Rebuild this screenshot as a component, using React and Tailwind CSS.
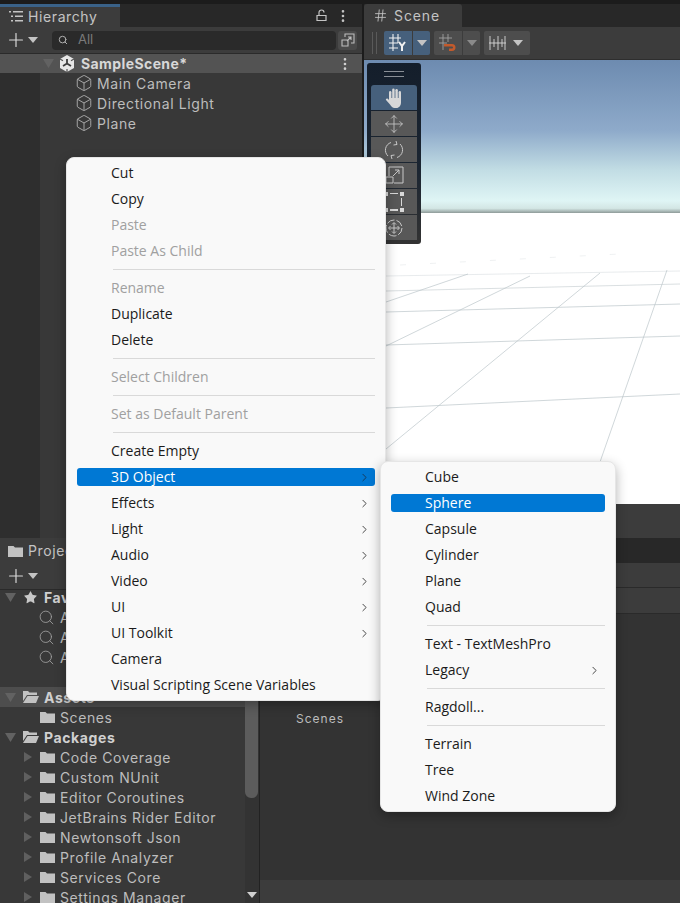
import { Box, ChevronRight, EllipsisVertical, Hash, Move, Plus, Search, Star } from "lucide-react";

const uiFont = "font-['Inter','Liberation_Sans',sans-serif]";

const mainMenu = [
  { label: "Cut" },
  { label: "Copy" },
  { label: "Paste", off: true },
  { label: "Paste As Child", off: true },
  { sep: true },
  { label: "Rename", off: true },
  { label: "Duplicate" },
  { label: "Delete" },
  { sep: true },
  { label: "Select Children", off: true },
  { sep: true },
  { label: "Set as Default Parent", off: true },
  { sep: true },
  { label: "Create Empty" },
  { label: "3D Object", arrow: true, active: true },
  { label: "Effects", arrow: true },
  { label: "Light", arrow: true },
  { label: "Audio", arrow: true },
  { label: "Video", arrow: true },
  { label: "UI", arrow: true },
  { label: "UI Toolkit", arrow: true },
  { label: "Camera" },
  { label: "Visual Scripting Scene Variables" },
];

const subMenu = [
  { label: "Cube" },
  { label: "Sphere", active: true },
  { label: "Capsule" },
  { label: "Cylinder" },
  { label: "Plane" },
  { label: "Quad" },
  { sep: true },
  { label: "Text - TextMeshPro" },
  { label: "Legacy", arrow: true },
  { sep: true },
  { label: "Ragdoll..." },
  { sep: true },
  { label: "Terrain" },
  { label: "Tree" },
  { label: "Wind Zone" },
];

const packages = [
  "Code Coverage",
  "Custom NUnit",
  "Editor Coroutines",
  "JetBrains Rider Editor",
  "Newtonsoft Json",
  "Profile Analyzer",
  "Services Core",
  "Settings Manager",
];

const Caret = ({ className = "", color = "#c4c4c4" }) => (
  <svg width="10" height="6" viewBox="0 0 10 6" className={className}>
    <path d="M0 0h10L5 6z" fill={color} />
  </svg>
);

const SideCaret = () => (
  <svg width="8" height="10" viewBox="0 0 8 10" className="shrink-0">
    <path d="M0 0l8 5-8 5z" fill="#5f5f5f" />
  </svg>
);

const DownCaret = () => (
  <svg width="11" height="9" viewBox="0 0 11 9" className="shrink-0">
    <path d="M0 0h11L5.5 9z" fill="#626262" />
  </svg>
);

const Folder = ({ className = "" }) => (
  <svg width="15" height="12" viewBox="0 0 15 12" className={`shrink-0 ${className}`}>
    <path d="M0 1h5.5l1.5 1.5H15V12H0z" fill="#c2c2c2" />
  </svg>
);

const FolderOpen = () => (
  <svg width="16" height="12" viewBox="0 0 16 12" className="shrink-0">
    <path d="M0 0h5l1.5 1.5H14V4H4L0 10z" fill="#c2c2c2" />
    <path d="M4.5 5H16l-3 7H0z" fill="#c2c2c2" />
  </svg>
);

const UnityLogo = () => (
  <svg width="16" height="17" viewBox="0 0 16 17">
    <path d="M8 0l7 4v9l-7 4-7-4V4z" fill="#e6e6e6" />
    <path d="M8 8.5V4M8 8.500l4 2.400M8 8.500l-4 2.400" stroke="#3b3b3b" strokeWidth="1.8" />
    <path d="M1 4l3 1.800M15 4l-3 1.800M8 17v-3" stroke="#535353" strokeWidth="1.2" />
  </svg>
);

const HandIcon = () => (
  <svg width="19" height="20" viewBox="0 0 19 20" fill="#d8d8d8">
    <rect x="4" y="3" width="2.400" height="10" rx="1.200" />
    <rect x="7.200" y="0.500" width="2.400" height="12" rx="1.200" />
    <rect x="10.400" y="1" width="2.400" height="12" rx="1.200" />
    <rect x="13.600" y="3" width="2.400" height="10" rx="1.200" />
    <path d="M4 10h12v4.500c0 3-2 5.500-4.500 5.500h-2C7.500 20 6.500 18.500 5 16.500L1 12c-.6-1 .8-2 1.800-1.200L4 12z" />
  </svg>
);

const MenuRow = ({ item }) => {
  if (item.sep) {
    return (
      <div className="h-[11px] flex items-center pl-[46px] pr-[10px]">
        <div className="h-px w-full bg-[#d9d9d9]" />
      </div>
    );
  }
  const tone = item.active ? "bg-[#0078d4] text-white" : item.off ? "text-[#a0a0a0]" : "text-[#1b1b1b]";
  return (
    <div className="h-[26px] flex items-center px-[10px]">
      <div className={`h-[18px] w-full rounded-[3px] flex items-center justify-between pl-[34px] pr-[4px] ${tone}`}>
        <span className="whitespace-nowrap mb-[2px]">{item.label}</span>
        {item.arrow && (
          <ChevronRight size={13} strokeWidth={1.8} className={item.active ? "text-[#16395a]" : "text-[#444]"} />
        )}
      </div>
    </div>
  );
};

const Menu = ({ items, className }) => (
  <div
    className={`absolute rounded-[8px] bg-[#f9f9f9] border border-[#e6e6e6] pt-[2px] shadow-[0_4px_12px_rgba(0,0,0,0.3)] font-['Open_Sans','Noto_Sans',sans-serif] text-[14px] ${className}`}
  >
    {items.map((item, i) => (
      <MenuRow item={item} key={i} />
    ))}
  </div>
);

const ToolButton = ({ active, children }) => (
  <div
    className={`h-[25px] flex items-center justify-center text-[#c8c8c8] ${active ? "bg-[#46607c] rounded-t-[3px]" : "bg-[#585858]"}`}
  >
    {children}
  </div>
);

const SceneGrid = () => (
  <svg viewBox="364 60 316 444" className="absolute inset-0 w-full h-full">
    <g stroke="#bcc6ca" strokeWidth="0.7" fill="none">
      <path d="M386 408L680 394" />
      <path d="M386 345L680 336" />
      <path d="M386 312L680 304" />
      <path d="M386 291L680 284" opacity="0.8" />
      <path d="M386 276L680 271" opacity="0.5" />
      <path d="M386 346L530 276" />
      <path d="M386 302L468 274" />
      <path d="M386 449L600 273" />
      <path d="M600 462L667 270" />
      <path d="M400 265L620 254" strokeDasharray="6 24" opacity="0.35" />
    </g>
  </svg>
);

const TreeRow = ({ children, className = "" }) => (
  <div className={`h-5 flex items-center whitespace-nowrap ${className}`}>{children}</div>
);

const HierarchyPanel = () => (
  <div className="w-[362px] flex flex-col bg-[#383838]">
    <div className="h-[23px] bg-[#282828] flex">
      <div className="w-[120px] bg-[#3c3c3c] border-t-[3px] border-[#3a6288] flex items-center pl-[9px] pb-[2px] gap-[5px] text-[#c4c4c4] text-[14px] tracking-[0.6px]">
        <svg width="14" height="11" viewBox="0 0 14 11" fill="#c4c4c4">
          <path d="M0 0h2v1.500H0zM4 0h10v1.500H4zM2 4.500h2V6H2zM6 4.500h8V6H6zM2 9h2v1.500H2zM6 9h8v1.500H6z" />
        </svg>
        Hierarchy
      </div>
      <div className="flex-1 flex items-center justify-end gap-[8px] pr-[11px]">
        <svg width="11" height="13" viewBox="0 0 11 13" fill="none" stroke="#c4c4c4" strokeWidth="1.2">
          <path d="M1 6.500h9v5H1zM3 6V3.500a2.500 2.500 0 0 1 5 0" />
        </svg>
        <EllipsisVertical size={16} className="text-[#c4c4c4]" />
      </div>
    </div>
    <div className="h-[27px] bg-[#3c3c3c] flex items-center pl-[5px] pr-[5px] border-b border-[#2a2a2a]">
      <Plus size={22} strokeWidth={1.3} className="text-[#d8d8d8]" />
      <Caret className="ml-[1px]" />
      <div className="ml-[14px] h-[19px] flex-1 rounded-[4px] bg-[#2a2a2a] flex items-center pl-[6px] gap-[10px] text-[#7a7a7a] text-[13px]">
        <Search size={10} strokeWidth={2.4} className="text-[#b0b0b0]" />
        All
      </div>
      <div className="ml-[2px] w-[19px] h-[19px] rounded-[3px] bg-[#4a4a4a] flex items-center justify-center">
        <svg width="14" height="14" viewBox="0 0 14 14" fill="none" stroke="#bdbdbd" strokeWidth="1.1">
          <path d="M4 4V1h9v9h-3M1 7h6v6H1zM6 8l4-4M7 4h3v3" />
        </svg>
      </div>
    </div>
    <div className="flex flex-1 text-[14px] tracking-[0.6px] text-[#bdbdbd]">
      <div className="flex-1 flex flex-col">
        <div className="h-[19px] bg-[#535353] flex items-center pl-[43px] pr-[9px] font-bold text-[#d8d8d8] text-[14px] tracking-[0.4px]">
          <DownCaret />
          <span className="ml-[5px] flex">
            <UnityLogo />
          </span>
          <span className="ml-[6px] flex-1">SampleScene*</span>
          <EllipsisVertical size={16} className="text-[#d0d0d0]" />
        </div>
        <div className="flex flex-1">
          <div className="w-10 bg-[#2e2e2e]" />
          <div className="flex-1 pl-[35px]">
            {["Main Camera", "Directional Light", "Plane"].map((name) => (
              <TreeRow className="gap-[4px]" key={name}>
                <Box size={18} strokeWidth={1.3} className="text-[#a8a8a8]" />
                {name}
              </TreeRow>
            ))}
          </div>
        </div>
      </div>
    </div>
  </div>
);

const ScenePanel = () => (
  <div className="flex-1 flex flex-col bg-[#3c3c3c]">
    <div className="h-[23px] bg-[#282828] flex">
      <div className="w-[98px] bg-[#3c3c3c] rounded-t-[3px] flex items-center pl-[9px] gap-[6px] text-[#c4c4c4] text-[14px] tracking-[0.9px]">
        <Hash size={15} strokeWidth={1.4} />
        Scene
      </div>
    </div>
    <div className="h-[33px] flex items-center pl-[8px] border-b border-[#2e2e2e]">
      <div className="w-[5px] h-[22px] border-x border-[#5a5a5a] mr-[7px]" />
      <div className="w-[28px] h-[24px] bg-[#46607c] rounded-l-[2px] flex items-center justify-center">
        <svg width="18" height="18" viewBox="0 0 18 18" fill="none" stroke="#f0f0f0" strokeWidth="1.1">
          <path d="M0 4h12M0 9h9M0 14h9M4 0v17M9 0v9" />
          <path d="M10 8l3 4 3-4M13 12v5" strokeWidth="2" />
        </svg>
      </div>
      <div className="ml-px w-[17px] h-[24px] bg-[#46607c] rounded-r-[2px] flex items-center justify-center">
        <Caret />
      </div>
      <div className="ml-[4px] w-[28px] h-[24px] bg-[#4d4d4d] rounded-l-[2px] flex items-center justify-center">
        <svg width="18" height="18" viewBox="0 0 18 18" fill="none">
          <path d="M0 4h13M0 9h8M4 0v16M9 0v8" stroke="#a0a0a0" strokeWidth="0.9" />
          <path d="M5 10h8a3 3 0 0 1 0 7H10v-2.500h3a.7.7 0 0 0 0-2H5z" fill="#c25a2c" />
        </svg>
      </div>
      <div className="ml-px w-[17px] h-[24px] bg-[#4d4d4d] rounded-r-[2px] flex items-center justify-center">
        <Caret color="#8a8a8a" />
      </div>
      <div className="ml-[4px] w-[46px] h-[24px] bg-[#4d4d4d] rounded-[2px] flex items-center justify-between pl-[5px] pr-[7px]">
        <svg width="17" height="14" viewBox="0 0 17 14" stroke="#d8d8d8" strokeWidth="0.9">
          <path d="M0 7h17M1 0v14M5 3v8M9 0v14M13 3v8M16 0v14" />
        </svg>
        <Caret />
      </div>
    </div>
    <div className="h-[444px] relative flex flex-col bg-white">
      <div className="h-[153px] bg-[linear-gradient(180deg,#6d8bb0_0%,#8eaaca_46%,#c2dde4_72%,#dff5f5_92%,#d3e6e4_97%,#8e9a98_100%)]" />
      <SceneGrid />
      <div className="absolute left-[3px] top-[3px] w-[54px] h-[181px] rounded-[3px] bg-[linear-gradient(180deg,#141e2b_0%,#1c2632_60%,#333333_100%)] px-[4px]">
        <div className="h-[22px] flex flex-col items-center justify-center gap-[4px]">
          <div className="h-px w-[20px] bg-[#8a8f96]" />
          <div className="h-px w-[20px] bg-[#8a8f96]" />
        </div>
        <div className="flex flex-col gap-px">
          <ToolButton active>
            <HandIcon />
          </ToolButton>
          <ToolButton>
            <Move size={20} strokeWidth={1} />
          </ToolButton>
          <ToolButton>
            <svg width="20" height="20" viewBox="0 0 20 20" fill="none" stroke="#c8c8c8" strokeWidth="1">
              <path d="M4 16a8 8 0 0 1 3-13.500M16 4a8 8 0 0 1-3 13.500M12 1l1 3.500L9.500 5M8 19l-1-3.500 3.500-.5" />
            </svg>
          </ToolButton>
          <ToolButton>
            <svg width="19" height="19" viewBox="0 0 19 19" fill="none" stroke="#c8c8c8" strokeWidth="1">
              <path d="M4 10V1h14v16H9M1 11h7v6H1zM8 10l6-6M10 4h4v4" />
            </svg>
          </ToolButton>
          <ToolButton>
            <svg width="20" height="20" viewBox="0 0 20 20" fill="#d8d8d8" stroke="none">
              <path d="M0 0h4v4H0zM16 0h4v4h-4zM0 16h4v4H0zM16 16h4v4h-4zM6 1h8v1H6zM6 17h8v2H6zM1 6h1v8H1zM17 6h1v8h-1z" />
            </svg>
          </ToolButton>
          <ToolButton>
            <svg width="20" height="20" viewBox="0 0 20 20" fill="none" stroke="#c8c8c8" strokeWidth="1">
              <circle cx="10" cy="10" r="8" strokeDasharray="8 2" />
              <path d="M10 5v10M5 10h10M8 6.500l2-2 2 2M8 13.500l2 2 2-2M6.500 8l-2 2 2 2M13.500 8l2 2-2 2" />
            </svg>
          </ToolButton>
        </div>
      </div>
    </div>
    <div className="flex-1 bg-[#3c3c3c]" />
  </div>
);

const ProjectPanel = () => (
  <div className="w-[259px] flex flex-col bg-[#383838] text-[14px] tracking-[0.6px] text-[#bdbdbd]">
    <div className="h-[25px] bg-[#282828] flex">
      <div className="w-[120px] bg-[#3c3c3c] flex items-center pl-[8px] gap-[5px] text-[#c4c4c4]">
        <Folder />
        Project
      </div>
    </div>
    <div className="h-[27px] bg-[#3c3c3c] flex items-center pl-[5px] border-b border-[#2a2a2a]">
      <Plus size={22} strokeWidth={1.3} className="text-[#d8d8d8]" />
      <Caret className="ml-[1px]" />
    </div>
    <div className="flex flex-1 overflow-hidden">
      <div className="flex-1 overflow-hidden">
        <TreeRow className="pl-[5px] mt-[-3px] font-bold text-[#d0d0d0]">
          <DownCaret />
          <Star size={15} fill="#c8c8c8" strokeWidth={0} className="ml-[7px] mr-[6px]" />
          Favorites
        </TreeRow>
        {["All Materials", "All Models", "All Prefabs"].map((name) => (
          <TreeRow className="pl-[38px] gap-[5px]" key={name}>
            <Search size={17} strokeWidth={1.2} className="text-[#a0a0a0]" />
            {name}
          </TreeRow>
        ))}
        <div className="h-[20px]" />
        <TreeRow className="pl-[5px] bg-[#4d4d4d] font-bold text-[#d0d0d0]">
          <DownCaret />
          <span className="ml-[7px] mr-[5px] flex">
            <FolderOpen />
          </span>
          Assets
        </TreeRow>
        <TreeRow className="pl-[40px] gap-[5px]">
          <Folder />
          Scenes
        </TreeRow>
        <TreeRow className="pl-[5px] font-bold text-[#d0d0d0]">
          <DownCaret />
          <span className="ml-[7px] mr-[5px] flex">
            <FolderOpen />
          </span>
          Packages
        </TreeRow>
        {packages.map((name) => (
          <TreeRow className="pl-[24px]" key={name}>
            <SideCaret />
            <span className="ml-[8px] mr-[5px] flex">
              <Folder />
            </span>
            {name}
          </TreeRow>
        ))}
      </div>
      <div className="w-[14px] relative flex flex-col items-center bg-[#333333] pr-px">
        <div className="w-[13px] h-[208px] rounded-[6px] bg-[#5c5c5c]" />
        <Caret className="absolute bottom-[5px]" color="#d0d0d0" />
      </div>
    </div>
  </div>
);

const BrowserPanel = () => (
  <div className="flex-1 flex flex-col bg-[#333333] border-l border-[#222222]">
    <div className="h-[25px] bg-[#282828]" />
    <div className="h-[25px] bg-[#3c3c3c] border-b border-[#2a2a2a]" />
    <div className="h-[26px] bg-[#3c3c3c] border-b border-[#2a2a2a]" />
    <div className="flex-1 pl-[36px] pt-[96px] text-[12px] tracking-[1px] text-[#bdbdbd]">Scenes</div>
    <div className="h-[23px] bg-[#3c3c3c]" />
  </div>
);

const App = () => (
  <div className={`relative w-[680px] h-[903px] overflow-hidden flex flex-col bg-[#1c1c1c] ${uiFont}`}>
    <div className="h-[538px] pt-[4px] flex gap-[2px]">
      <HierarchyPanel />
      <ScenePanel />
    </div>
    <div className="flex-1 flex overflow-hidden">
      <ProjectPanel />
      <BrowserPanel />
    </div>
    <Menu items={mainMenu} className="left-[66px] top-[157px] w-[320px] h-[544px]" />
    <Menu items={subMenu} className="left-[380px] top-[461px] w-[236px] h-[351px]" />
  </div>
);

export default App;
